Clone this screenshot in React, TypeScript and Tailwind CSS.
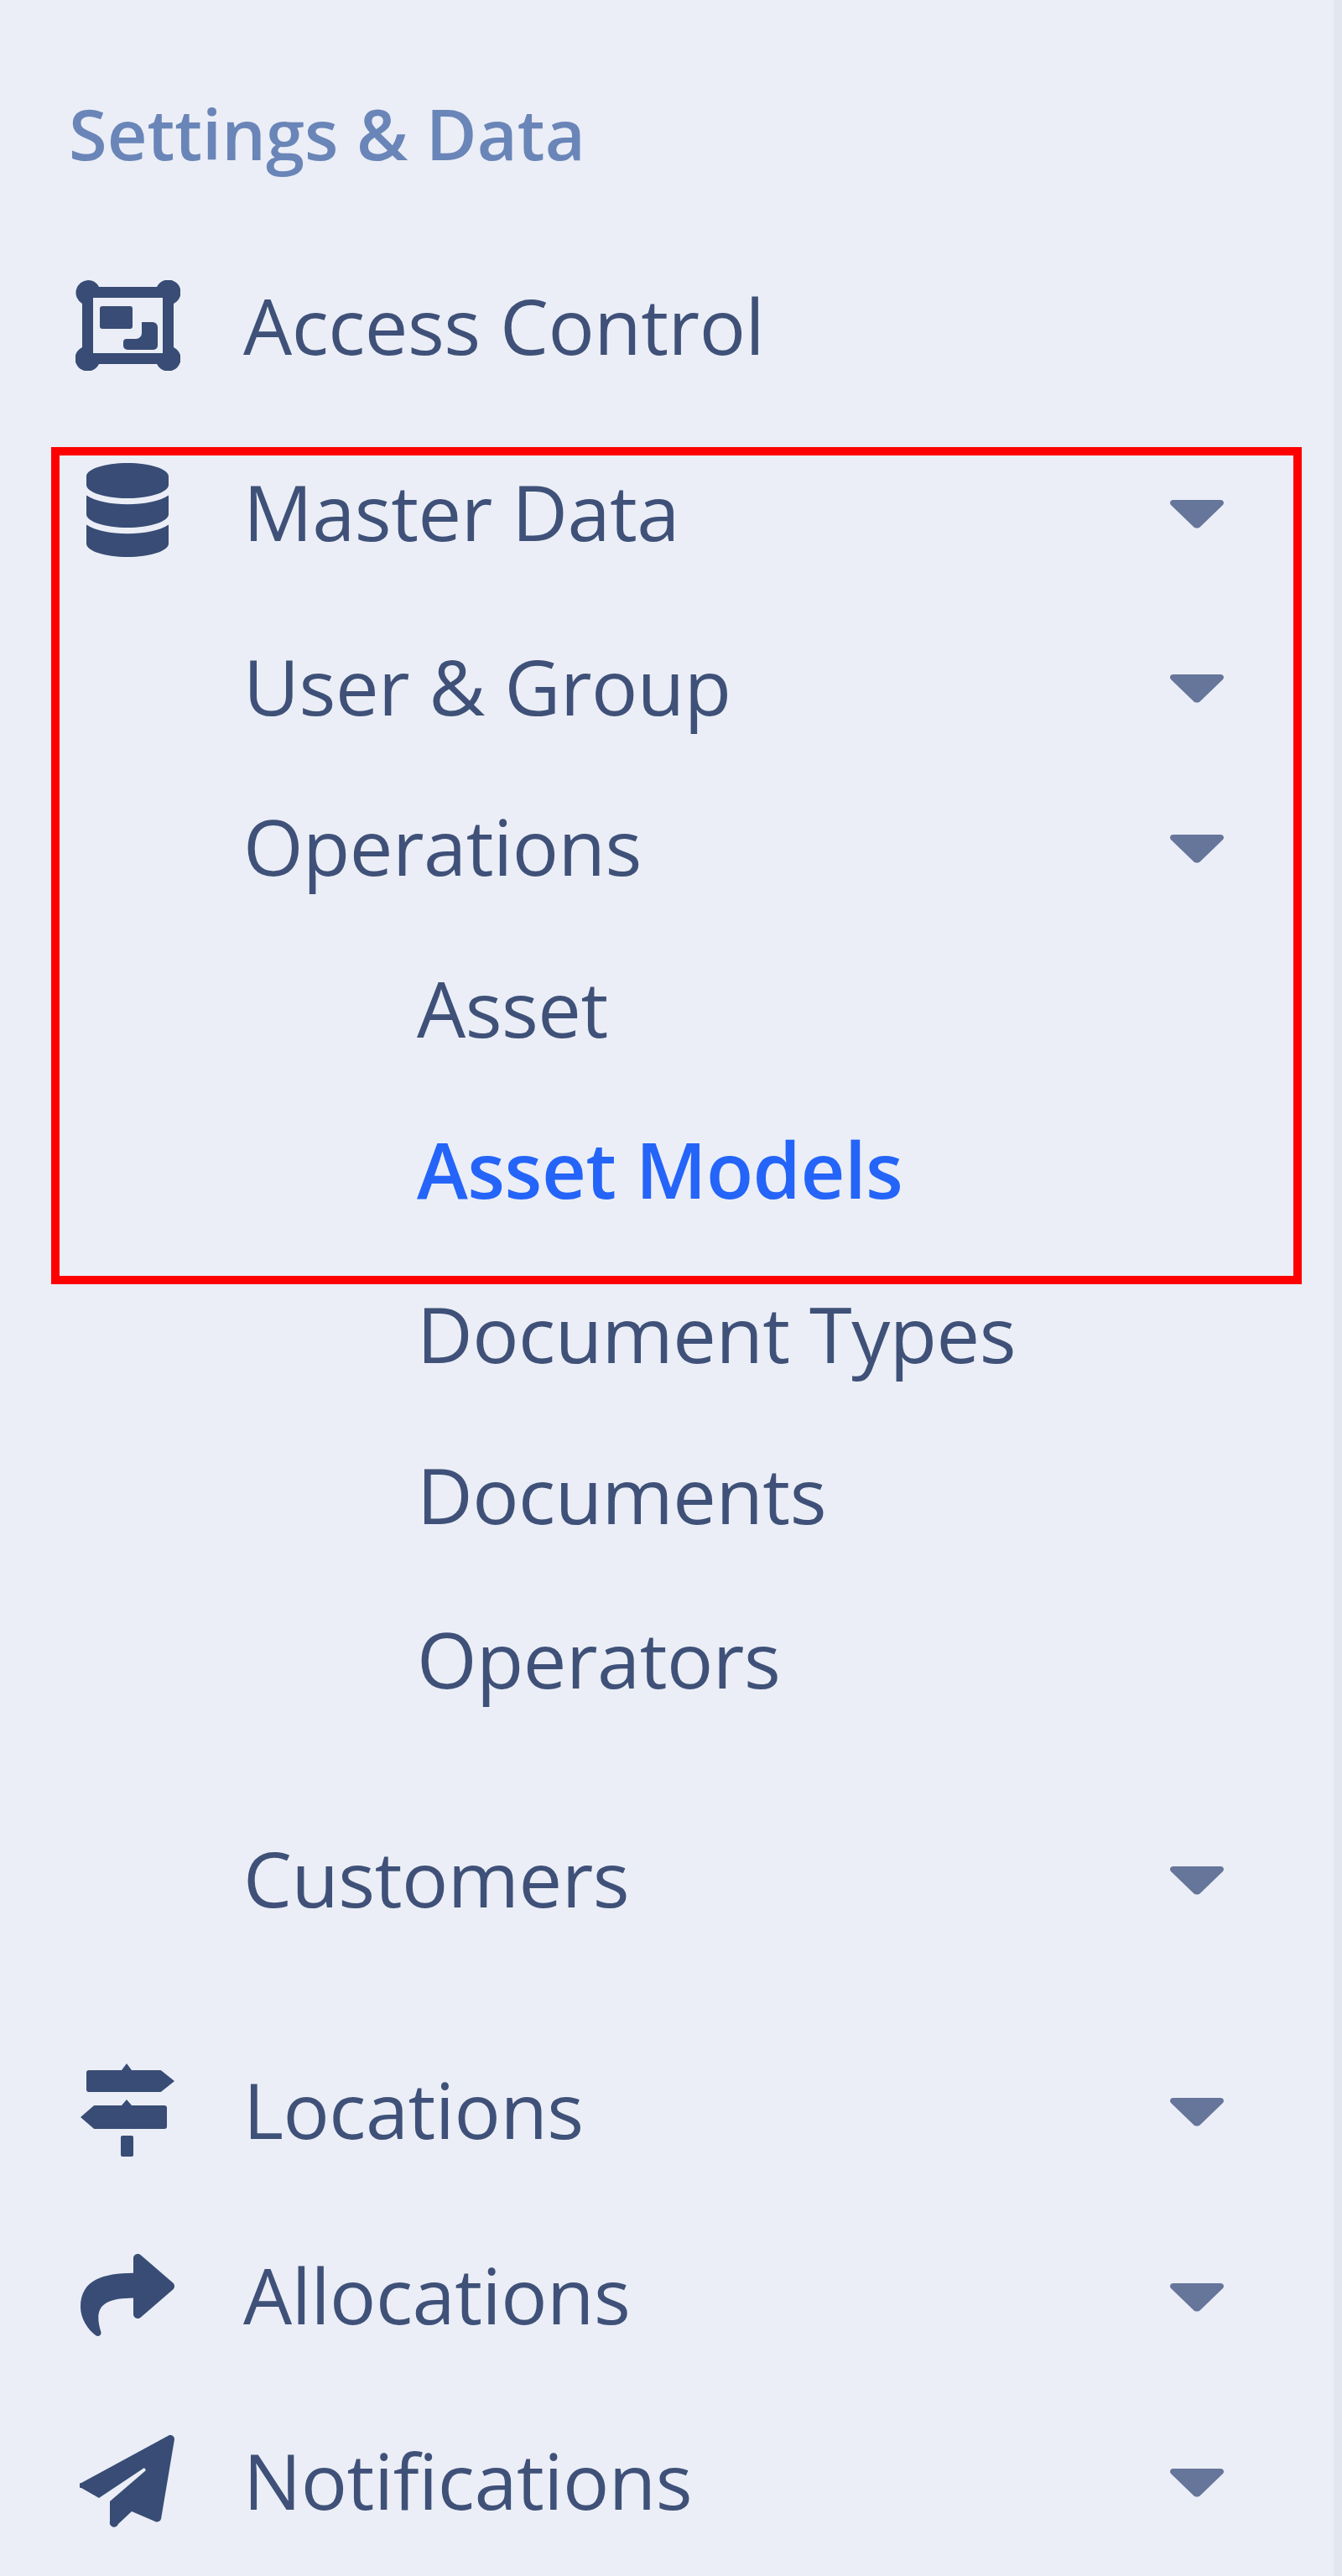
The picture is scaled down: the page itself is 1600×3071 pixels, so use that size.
import React from 'react';
import { FaDatabase, FaShare } from 'react-icons/fa';

function Caret() {
  return (
    <svg viewBox="0 0 64 34" className="w-[64px] h-[34px] fill-[#66759a] shrink-0 translate-y-[3px]">
      <path d="M4 0h56c4 0 5 4 3 6L36 32c-2 2-6 2-8 0L1 6C-1 4 0 0 4 0z" />
    </svg>
  );
}

// fa-object-group with the round corner nodes of the reference
function AccessIcon() {
  return (
    <svg viewBox="0 0 125 108" className="w-[125px] h-[108px] fill-current">
      <path d="M15 0a15 15 0 0 1 13 8h69a15 15 0 1 1 20 20v52a15 15 0 1 1-20 20H28A15 15 0 1 1 8 80V28A15 15 0 0 1 15 0zM21 21v66h83V21z" fillRule="evenodd" />
      <rect x="29" y="31" width="39" height="27" rx="3" />
      <path d="M79 50h13a6 6 0 0 1 6 6v22a5 5 0 0 1-5 5H62a5 5 0 0 1-5-5v-4a4 4 0 0 1 4-4h11a7 7 0 0 0 7-7z" />
    </svg>
  );
}

function SignsIcon() {
  return (
    <svg viewBox="0 0 112 111" className="w-[112px] h-[111px] fill-current">
      <path d="M49 8l6-8 6 8h34a3 3 0 0 1 2 1l15 12-15 12a3 3 0 0 1-2 1H10a3 3 0 0 1-3-3V11a3 3 0 0 1 3-3z" />
      <path d="M49 50l6-7 6 7h39a3 3 0 0 1 3 3v22a3 3 0 0 1-3 3H17a3 3 0 0 1-2-1L0 64l15-13a3 3 0 0 1 2-1z" />
      <rect x="48" y="86" width="15" height="25" rx="2" />
    </svg>
  );
}

function PlaneIcon() {
  return (
    <svg viewBox="0 0 114 111" className="w-[114px] h-[111px] fill-current">
      <path d="M107 1L2 58a3 3 0 0 0 0 6l21 12 54-36 2 3-43 37v24a5 5 0 0 0 10 3l16-15 28 12a5 5 0 0 0 7-3l16-95a5 5 0 0 0-6-5z" />
    </svg>
  );
}

function MenuRow({
  label,
  rowClass,
  icon,
  hasCaret,
}: {
  label: string;
  rowClass: string;
  icon?: React.ReactNode;
  hasCaret?: boolean;
}) {
  return (
    <div className={`flex items-center ${rowClass}`}>
      <div className="w-[208px] flex justify-center shrink-0 pr-[68px] text-[#384c75]">{icon}</div>
      <span className="flex-1 text-[#3f5178]">{label}</span>
      {hasCaret && <Caret />}
    </div>
  );
}

function SubRow({ label, rowClass, active }: { label: string; rowClass: string; active?: boolean }) {
  return (
    <div className={`flex items-center pl-[415px] ${rowClass} ${active ? 'font-semibold text-[#2464f8]' : 'text-[#3f5178]'}`}>
      {label}
    </div>
  );
}

export default function App() {
  return (
    <div className="relative w-full h-[3071px] overflow-hidden bg-[#ebeef6] border-r-[10px] border-[#e2e6f1] font-['Open_Sans',sans-serif] text-[92px] leading-none tracking-[-0.5px]">
      <div className="pt-[108px] pl-[82px] pr-[131px]">
        <div className="h-[100px] flex items-center font-semibold text-[83px] tracking-normal text-[#6a85b8]">Settings &amp; Data</div>

        <nav className="pt-[70px]">
          <MenuRow label="Access Control" rowClass="h-[220px]" icon={<AccessIcon />} />
          <MenuRow label="Master Data" rowClass="h-[224px]" icon={<FaDatabase className="w-[100px] h-[112px] -translate-y-[2px]" />} hasCaret />
          <MenuRow label="User & Group" rowClass="h-[192px]" hasCaret />
          <MenuRow label="Operations" rowClass="h-[190px]" hasCaret />
          <SubRow label="Asset" rowClass="h-[195px]" />
          <SubRow label="Asset Models" rowClass="h-[190px]" active />
          <SubRow label="Document Types" rowClass="h-[196px] mt-[3px]" />
          <SubRow label="Documents" rowClass="h-[187px]" />
          <SubRow label="Operators" rowClass="h-[196px] mt-[5px]" />
          <MenuRow label="Customers" rowClass="h-[190px] mt-[68px]" hasCaret />
          <MenuRow label="Locations" rowClass="h-[222px] mt-[70px]" icon={<SignsIcon />} hasCaret />
          <MenuRow label="Allocations" rowClass="h-[220px]" icon={<FaShare className="w-[112px] h-[112px]" />} hasCaret />
          <MenuRow label="Notifications" rowClass="h-[222px]" icon={<PlaneIcon />} hasCaret />
        </nav>
      </div>

      {/* annotation box drawn over the menu */}
      <div className="absolute left-[61px] top-[533px] w-[1491px] h-[998px] border-[10px] border-[#ff0000]" />
    </div>
  );
}
